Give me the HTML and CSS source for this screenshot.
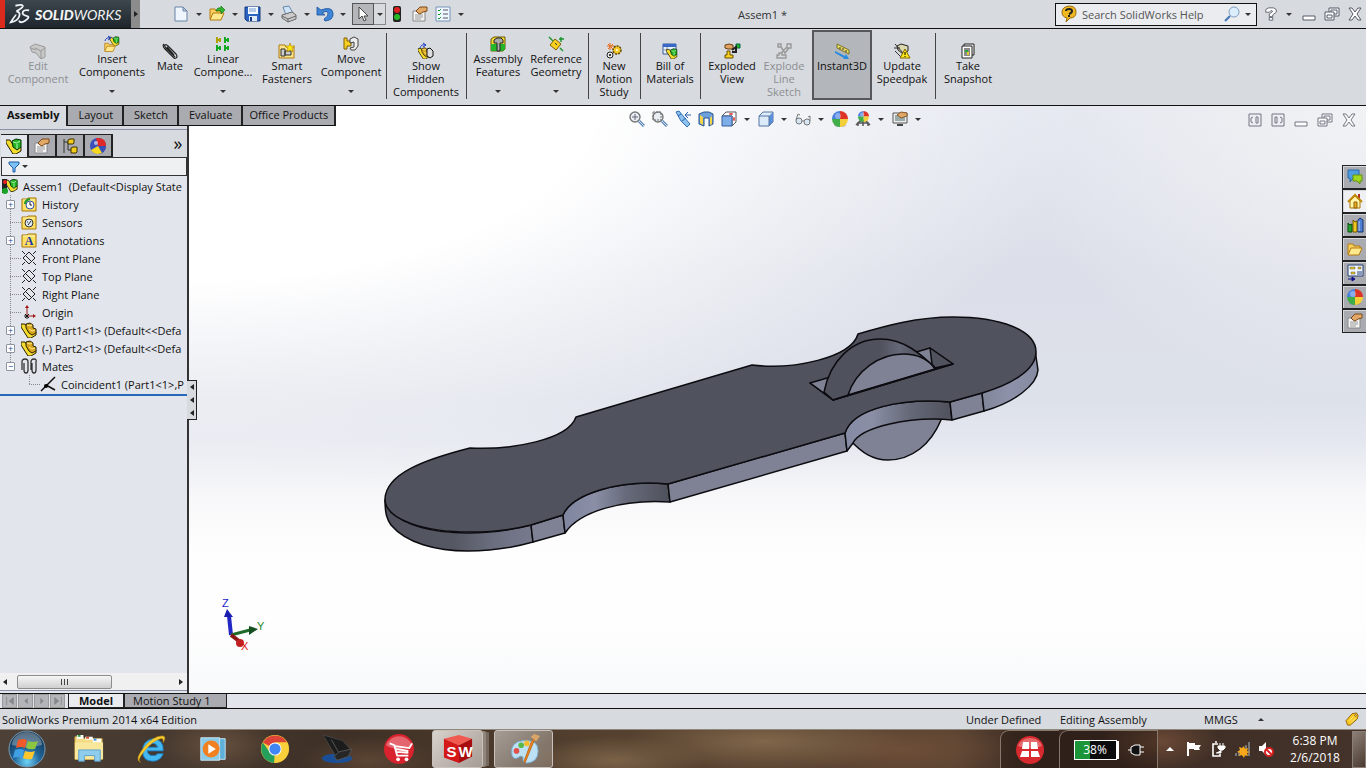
FILE: index.html
```
<!DOCTYPE html>
<html lang="en">
<head>
    <meta charset="utf-8">
    <title>SolidWorks - Assem1</title>
    <link rel="stylesheet" href="styles.css">
</head>
<body>
    <!-- Icon sprite -->
    <svg class="sprite" aria-hidden="true">
        <symbol id="part" viewBox="0 0 16 16">
            <path d="M0 2h4l6 9 5-1v3l-5 3h-3L0 5z" fill="#f4dc30" stroke="#2a2200"/>
            <path d="M5 2l4-1 3 2v3l3 1v4l-4 2-3-2-3-5z" fill="#d9a51c" stroke="#2a2200"/>
            <path d="M6 3l3 1 2-1M8 7l3 2 3-1" fill="none" stroke="#ffe98c"/>
        </symbol>
        <symbol id="asm" viewBox="0 0 16 16">
            <path d="M0 2h4l5 8 6-1v4l-5 3H7L0 5z" fill="#f4dc30" stroke="#222000"/>
            <path d="M6 3l4-2 5 1v7l-4 3-4-3z" fill="#24b524" stroke="#003000"/>
            <path d="M7 4l4 1 3-2M11 6v5" fill="none" stroke="#b4f4b4"/>
        </symbol>
        <symbol id="folder" viewBox="0 0 16 16">
            <path d="M1 13V3h5l1 2h6v3" fill="#f8d060" stroke="#b47a10"/>
            <path d="M1 14l3-7h11l-3 7z" fill="#ffe98c" stroke="#b47a10"/>
        </symbol>
        <symbol id="props" viewBox="0 0 16 16">
            <path d="M1 5h12v10H1z" fill="#f4f4f4" stroke="#888"/>
            <path d="M3 9h8M3 11h8M3 13h6" stroke="#999"/>
            <path d="M4 5l4-4h7v4l-4 1-3 2-2-1z" fill="#e2a868" stroke="#7a4818"/>
        </symbol>
        <symbol id="ball" viewBox="0 0 16 16">
            <ellipse cx="8" cy="14" rx="6" ry="2" fill="#777" opacity=".5"/>
            <path d="M8 8V0a8 8 0 0 0-8 8z" fill="#4a80e0"/>
            <path d="M8 8h8a8 8 0 0 0-8-8z" fill="#dd3428"/>
            <path d="M8 8v8a8 8 0 0 0 8-8z" fill="#f3cf3a"/>
            <path d="M8 8H0a8 8 0 0 0 8 8z" fill="#3fae49"/>
            <circle cx="6" cy="5" r="3" fill="#fff" opacity=".35"/>
        </symbol>
        <symbol id="plane" viewBox="0 0 16 16">
            <path d="M1 1l3 3M12 12l3 3M8 2l6 6-6 6-6-6zM15 1l-3 3M4 12l-3 3M5 6l5 5" fill="none" stroke="#222"/>
        </symbol>
        <symbol id="lens" viewBox="0 0 16 16">
            <circle cx="6" cy="6" r="5" fill="#e8eef4" stroke="#777" stroke-width="1.4"/>
            <path d="M10 10l5 5" stroke="#5a86b8" stroke-width="3"/>
            <path d="M10 10l5 5" stroke="#cfe2f4"/>
        </symbol>
        <symbol id="restore" viewBox="0 0 16 14">
            <path d="M5 1h10v8H5z" fill="#fff" stroke="#555a68"/>
            <path d="M7 3h6v4H7z" fill="none" stroke="#555a68"/>
            <path d="M1 5h9v8H1z" fill="#fff" stroke="#555a68"/>
            <path d="M3 8h5v3H3z" fill="none" stroke="#555a68"/>
        </symbol>
        <symbol id="cross" viewBox="0 0 14 14">
            <path d="M1 1h3l3 4 3-4h3L9 7l4 6h-3L7 9l-3 4H1l4-6z" fill="#fff" stroke="#555a68"/>
        </symbol>
        <symbol id="mini" viewBox="0 0 14 14">
            <path d="M1 9h12v4H1z" fill="#fff" stroke="#555a68"/>
        </symbol>
        <symbol id="tfolder" viewBox="0 0 16 16">
            <path d="M1 3h5l1-1h8v13H1z" fill="#ffe060" stroke="#a87508"/>
            <path d="M2 4h12" stroke="#fff4b0"/>
        </symbol>
        <symbol id="clip" viewBox="0 0 16 16">
            <path d="M13 14L4 5q-2-2-1-3t3 1l8 8q2 3 0 4t-3-1L3 6Q0 3 2 1M12 12L5 4" fill="none" stroke="#222" stroke-width="1.2"/>
        </symbol>
    </svg>

    <header class="titlebar">
        <div class="brand">
            <svg class="brand-mark" viewBox="0 0 24 22" aria-hidden="true">
                <path d="M7 2q7-2 8 0t-7 6M8 8q5 1 3 6t-9 6q5-8 6-8M22 7q-6-1-7 2t4 4-1 5-7 0" fill="none" stroke="#eef2f5" stroke-width="2"/>
            </svg>
            <span class="brand-name"><b>SOLID</b>WORKS</span>
        </div>
        <button class="brand-more" aria-label="Menu"><i class="right"></i></button>
        <nav class="quick">
            <button aria-label="New"><svg viewBox="0 0 16 16"><path d="M2 1h8l4 4v10H2z" fill="#eef5fd" stroke="#6b83a5"/><path d="M10 1v4h4z" fill="#b9cce4" stroke="#6b83a5"/></svg></button>
            <button class="drop" aria-label="New options"><i></i></button>
            <button aria-label="Open"><svg viewBox="0 0 16 16"><use href="#folder"/><path d="M7 5q1-4 5-3V0l4 4-4 4V5q-3-1-5 0z" fill="#2fb52f" stroke="#0a6a0a" stroke-width=".6"/></svg></button>
            <button class="drop" aria-label="Open options"><i></i></button>
            <button aria-label="Save"><svg viewBox="0 0 16 16"><path d="M0 1h15v14H2l-2-2z" fill="#2c62c0" stroke="#133a80"/><path d="M3 1h10v7H3z" fill="#f4f8ff"/><path d="M4 3h7M4 5h7" stroke="#7a9ad0"/><path d="M4 10h8v5H4z" fill="#dfe8f5"/><path d="M5 11h2v4H5z" fill="#133a80"/></svg></button>
            <button class="drop" aria-label="Save options"><i></i></button>
            <button aria-label="Print"><svg viewBox="0 0 16 16"><path d="M2 1l6-1 4 7-7 2z" fill="#cfe4f8" stroke="#6888a8"/><path d="M1 9l10-3 4 3v4l-8 3-6-4z" fill="#ccc" stroke="#666"/><path d="M1 10l6 3 8-3M7 13v3" fill="none" stroke="#666"/></svg></button>
            <button class="drop" aria-label="Print options"><i></i></button>
            <button aria-label="Undo"><svg viewBox="0 0 16 16"><path d="M0 1v8h8L5 7q5-3 6 0t-4 6l1 2q9-1 8-8T4 4z" fill="#3f86d8" stroke="#184f98" stroke-width=".8"/></svg></button>
            <button class="drop" aria-label="Undo options"><i></i></button>
            <button class="picked" aria-label="Select"><svg viewBox="0 0 16 16"><path d="M4 1v12l3-3 2 5 2-1-2-4h4z" fill="#fff" stroke="#444"/></svg></button>
            <button class="drop picked-drop" aria-label="Select options"><i></i></button>
            <button aria-label="Rebuild"><svg viewBox="0 0 16 16"><rect x="4" y="0" width="8" height="16" rx="2" fill="#222"/><circle cx="8" cy="4" r="3" fill="#e02020"/><circle cx="8" cy="11" r="3" fill="#28b828"/></svg></button>
            <button class="spaced" aria-label="File properties"><svg viewBox="0 0 16 16"><use href="#props"/></svg></button>
            <button class="spaced" aria-label="Options"><svg viewBox="0 0 16 16"><path d="M1 1h14v14H1z" fill="#eef6ff" stroke="#7694b8"/><path d="M3 4l1 1 2-2M3 8l1 1 2-2M3 12l1 1 2-2" fill="none" stroke="#18982a"/><path d="M8 4h5M8 8h5M8 12h5" stroke="#556"/></svg></button>
            <button class="drop" aria-label="More options"><i></i></button>
        </nav>
        <h1 class="doc-title">Assem1 *</h1>
        <form class="search">
            <svg viewBox="0 0 16 16"><path d="M8 0q7 0 7 6t-6 6l-4 4 1-4Q1 11 1 6t7-6z" fill="#f0b822" stroke="#9a6a08"/><path d="M5 5q0-2 3-2t3 2-3 3M8 9v2" fill="none" stroke="#222" stroke-width="2"/></svg>
            <input type="text" aria-label="Search" placeholder="Search SolidWorks Help">
            <button type="button" aria-label="Find"><svg viewBox="0 0 16 16"><circle cx="10" cy="6" r="5" fill="#dceefb" stroke="#7f9fc0"/><path d="M6 10l-5 5" stroke="#4474b4" stroke-width="2"/></svg></button>
            <button type="button" class="drop" aria-label="Search options"><i></i></button>
        </form>
        <div class="window-buttons">
            <button aria-label="Help"><svg viewBox="0 0 16 16"><path d="M2 6V3l3-2h6l3 2v3l-4 3v2H6V8l4-3-2-1-2 2zM6 12h4v3H6z" fill="#fff" stroke="#555a68"/></svg></button>
            <button class="drop" aria-label="Help options"><i></i></button>
            <button aria-label="Minimize"><svg viewBox="0 0 14 14"><use href="#mini"/></svg></button>
            <button aria-label="Restore"><svg class="wide" viewBox="0 0 16 14"><use href="#restore"/></svg></button>
            <button aria-label="Close"><svg viewBox="0 0 14 14"><use href="#cross"/></svg></button>
        </div>
    </header>

    <section class="ribbon">
        <button class="tool w-xl" disabled><svg viewBox="0 0 16 16"><path d="M0 4l5-3 10 3v10l-4 2-5-6-4-1z" fill="#c8c8c8" stroke="#999"/><path d="M5 5l6 3v7M11 8l4-3M1 5l5 2" fill="none" stroke="#999"/></svg><span>Edit<br>Component</span></button>
        <button class="tool has-menu w-xl"><svg viewBox="0 0 16 16"><use href="#asm" x="5" y="0" width="11" height="10"/><use href="#folder" x="0" y="5" width="12" height="12"/><path d="M1 5q1-4 5-3M4 0l3 2-3 2" fill="none" stroke="#1838c8"/></svg><span>Insert<br>Components</span><i></i></button>
        <button class="tool w-xs"><svg viewBox="0 0 16 16"><use href="#clip"/></svg><span>Mate</span></button>
        <button class="tool has-menu w-l"><svg viewBox="0 0 16 16"><path d="M2 1v6M2 4h4M5 2v4" stroke="#b0a000" stroke-width="2"/><path d="M10 1v6M10 4h4M13 2v4M2 9v6M2 12h4M5 10v4M10 9v6M10 12h4M13 10v4" stroke="#12a822" stroke-width="2"/></svg><span>Linear<br>Compone...</span><i></i></button>
        <button class="tool w-l"><svg viewBox="0 0 16 16"><path d="M0 2h6l1 2h8v11H0z" fill="#fbe48a" stroke="#b07a10"/><path d="M2 6h4v7H2zM6 8h6v4H6z" fill="#ccc" stroke="#333"/><path d="M11 0l1 3h4l-3 2 1 4-3-2-3 2 1-4-3-2h4z" fill="#ffe610" stroke="#a88000" stroke-width=".6"/></svg><span>Smart<br>Fasteners</span></button>
        <button class="tool has-menu w-l"><svg viewBox="0 0 16 16"><path d="M1 2h3v3h4v5H4v3H1z" fill="#f8d020" stroke="#806000"/><path d="M7 3l4-2 4 2v7l-3 4H8l-1-2 4-1V6L7 7z" fill="#eee" stroke="#444"/></svg><span>Move<br>Component</span><i></i></button>
        <span class="rule"></span>
        <button class="tool w-xl"><svg viewBox="0 0 16 16"><use href="#part" x="0" y="4" width="12" height="12"/><path d="M9 6l3-1 3 3v5l-3 2-3-2z" fill="#ddd" stroke="#111"/><path d="M2 5q1-4 5-3M5 0l3 2-3 2" fill="none" stroke="#1838c8"/></svg><span>Show<br>Hidden<br>Components</span></button>
        <span class="rule"></span>
        <button class="tool has-menu w-m"><svg viewBox="0 0 16 16"><path d="M1 3l3-2h11v12l-2 2H1z" fill="#f8dc30" stroke="#6a5600"/><path d="M1 8h14v5l-2 2H1z" fill="#25b52b"/><path d="M4 4l3-2h4l2 2v3h-3v8H7V7H4z" fill="#aaa" stroke="#222"/></svg><span>Assembly<br>Features</span><i></i></button>
        <button class="tool has-menu w-m"><svg viewBox="0 0 16 16"><path d="M1 1l4 4M12 12l3 3M11 3h5M13 1v5" stroke="#16942a" stroke-width="1.4"/><path d="M7 3l6 5-5 6-6-5z" fill="#f8d020" stroke="#806000"/><path d="M7 7l2 2" stroke="#333"/></svg><span>Reference<br>Geometry</span><i></i></button>
        <span class="rule"></span>
        <button class="tool w-s"><svg viewBox="0 0 16 16"><circle cx="11" cy="7" r="4" fill="#f6c828" stroke="#5c4400" stroke-width="1.5" stroke-dasharray="2 1"/><circle cx="11" cy="7" r="1" fill="#fff"/><circle cx="4" cy="12" r="3" fill="#eee" stroke="#222"/><circle cx="4" cy="12" r="1"/><path d="M4 0v7M1 3h7M2 1l5 5M7 1L2 6" stroke="#e86818"/></svg><span>New<br>Motion<br>Study</span></button>
        <span class="rule"></span>
        <button class="tool w-s2"><svg viewBox="0 0 16 16"><path d="M1 1h13v10H1z" fill="#e8f0fc" stroke="#3858a0"/><path d="M1 1h13v3H1z" fill="#3868c8"/><path d="M1 7h13M5 4v7" stroke="#89a"/><use href="#asm" x="4" y="5" width="12" height="11"/></svg><span>Bill of<br>Materials</span></button>
        <span class="rule"></span>
        <button class="tool w-m"><svg viewBox="0 0 16 16"><path d="M1 2l4-1 4 1v4H4L1 5z" fill="#dfa264" stroke="#6a4010"/><path d="M12 1h4v4h-4z" fill="#25b52b" stroke="#064"/><path d="M8 7l4-3v5H8" fill="none" stroke="#222" stroke-width="2"/><path d="M3 8h3v4h3v3H1v-3h2z" fill="#f8d020" stroke="#6a5000"/></svg><span>Exploded<br>View</span></button>
        <button class="tool w-s" disabled><svg viewBox="0 0 16 16"><path d="M2 1h3v3H2zM11 1h4v4h-4zM3 10h3v2h4v3H1v-3h2zM5 4l4 6 4-5M5 10l6-6" fill="none" stroke="#999" stroke-width="1.4"/></svg><span>Explode<br>Line<br>Sketch</span></button>
        <button class="tool w-m2 pressed"><svg viewBox="0 0 16 16"><path d="M3 1l12 6v4L3 5z" fill="#efdf60" stroke="#77702a"/><path d="M6 4v2M9 5v2M12 7v2" stroke="#333"/><path d="M1 8l10 5 1-2 3 5-6 0 1-1-9-5z" fill="#2a8ce0"/></svg><span>Instant3D</span></button>
        <button class="tool w-m2"><svg viewBox="0 0 16 16"><path d="M3 3l4-2 7 2v5l-5 3-5-4z" fill="#dcd8b0" stroke="#222"/><path d="M1 1l8 9M1 8l7 7M0 5h6" stroke="#333"/><path d="M11 6l5 9H6z" fill="#ffe818" stroke="#806a00"/><path d="M11 9v3M11 13v1" stroke="#000"/></svg><span>Update<br>Speedpak</span></button>
        <span class="rule"></span>
        <button class="tool w-m2"><svg viewBox="0 0 16 16"><path d="M4 1h10v11H4z" fill="#eee" stroke="#222"/><path d="M2 3h10v12H2z" fill="#fff" stroke="#222"/><path d="M4 5h6v8H4z" fill="#8a8a8a"/><path d="M5 7h3v2H5z" fill="#28a838"/><path d="M7 9h2v3H7z" fill="#eacb2a"/></svg><span>Take<br>Snapshot</span></button>
    </section>

    <main class="workspace">
        <aside class="side">
            <nav class="command-tabs">
                <button class="active">Assembly</button>
                <button>Layout</button>
                <button>Sketch</button>
                <button>Evaluate</button>
                <button>Office Products</button>
            </nav>
            <div class="panel">
                <nav class="panel-tabs">
                    <button class="active" aria-label="FeatureManager"><svg viewBox="0 0 16 16"><use href="#asm"/></svg></button>
                    <button aria-label="PropertyManager"><svg viewBox="0 0 16 16"><use href="#props"/></svg></button>
                    <button aria-label="ConfigurationManager"><svg viewBox="0 0 16 16"><path d="M2 1v14M2 4h4M6 4v8h4" fill="none" stroke="#333"/><path d="M6 2l2-1h4v4l-1 1H6zM9 10l2-1h4v5l-1 1H9z" fill="#f4cd1c" stroke="#3c3000"/></svg></button>
                    <button aria-label="DisplayManager"><svg viewBox="0 0 16 16"><circle cx="8" cy="8" r="8" fill="#3a50b8"/><path d="M8 8L6 0q10-1 10 8z" fill="#e02828"/><path d="M8 8l8 1q-2 8-9 7z" fill="#3a50b8"/><path d="M8 8l-7 4q4 6 11 3z" fill="#f6d820"/><circle cx="6" cy="5" r="2" fill="#fff" opacity=".6"/></svg></button>
                    <button class="more" aria-label="Expand">»</button>
                </nav>
                <div class="filter">
                    <svg viewBox="0 0 12 12"><path d="M1 1h10v2L7 7v4H5V7L1 3z" fill="#7cc0f4" stroke="#1a5aa8"/></svg>
                    <i></i>
                    <input type="text" aria-label="Filter tree">
                </div>
                <div class="tree">
                    <div class="row root"><svg viewBox="0 0 16 16"><use href="#asm" x="3" y="0" width="13" height="14"/><path d="M0 1h5v14H0z" fill="#222"/><circle cx="3" cy="4" r="2" fill="#e22"/><circle cx="3" cy="13" r="3" fill="#18a428"/></svg>Assem1&nbsp; (Default&lt;Display State</div>
                    <ul>
                        <li><div class="row"><button class="toggle" aria-label="Expand">+</button><svg viewBox="0 0 16 16"><use href="#tfolder"/><circle cx="9" cy="9" r="4" fill="#fff" stroke="#2c50a8"/><path d="M9 6v3h2" fill="none" stroke="#222"/><path d="M4 8q0-4 5-5" fill="none" stroke="#1a9c2a" stroke-width="2"/></svg>History</div></li>
                        <li><div class="row"><span class="stub"></span><svg viewBox="0 0 16 16"><use href="#tfolder"/><circle cx="8" cy="9" r="4" fill="#dde8f4" stroke="#333"/><path d="M7 11l3-4M6 8h1" stroke="#222"/></svg>Sensors</div></li>
                        <li><div class="row"><button class="toggle" aria-label="Expand">+</button><svg viewBox="0 0 16 16"><use href="#tfolder"/><text x="8" y="13" class="glyph-a">A</text></svg>Annotations</div></li>
                        <li><div class="row"><span class="stub"></span><svg viewBox="0 0 16 16"><use href="#plane"/></svg>Front Plane</div></li>
                        <li><div class="row"><span class="stub"></span><svg viewBox="0 0 16 16"><use href="#plane"/></svg>Top Plane</div></li>
                        <li><div class="row"><span class="stub"></span><svg viewBox="0 0 16 16"><use href="#plane"/></svg>Right Plane</div></li>
                        <li><div class="row"><span class="stub"></span><svg viewBox="0 0 16 16"><path d="M6 12V2M6 12h7" stroke="#a01818"/><path d="M4 4l2-3 2 3zM12 10l3 2-3 2z" fill="#a01818"/><path d="M4 10l4 4M8 10l-4 4M3 12h3M6 12v3" stroke="#111"/></svg>Origin</div></li>
                        <li><div class="row"><button class="toggle" aria-label="Expand">+</button><svg viewBox="0 0 16 16"><use href="#part"/></svg>(f) Part1&lt;1&gt; (Default&lt;&lt;Defa</div></li>
                        <li><div class="row"><button class="toggle" aria-label="Expand">+</button><svg viewBox="0 0 16 16"><use href="#part"/></svg>(-) Part2&lt;1&gt; (Default&lt;&lt;Defa</div></li>
                        <li>
                            <div class="row"><button class="toggle" aria-label="Collapse">−</button><svg viewBox="0 0 16 16"><path d="M1 12V4q0-3 3-3t3 3v8q0 3-2 3t-2-3V5M10 12V4q0-3 3-3t2 3v8q0 3-2 3t-2-3V5" fill="none" stroke="#333" stroke-width="1.3"/></svg>Mates</div>
                            <ul>
                                <li><div class="row"><span class="stub"></span><svg viewBox="0 0 16 16"><path d="M15 1L1 15M6 9l9 5" stroke="#111" stroke-width="1.5"/><circle cx="6" cy="10" r="2"/></svg>Coincident1 (Part1&lt;1&gt;,P</div></li>
                            </ul>
                        </li>
                    </ul>
                </div>
                <div class="hscroll">
                    <button aria-label="Scroll left"><i class="left"></i></button>
                    <span class="thumb"></span>
                    <button class="end" aria-label="Scroll right"><i class="right"></i></button>
                </div>
            </div>
            <div class="splitter"><i class="left"></i><i class="left"></i><i class="left"></i></div>
        </aside>

        <section class="viewport">
            <!-- Model -->
            <svg class="model" viewBox="189 106 1177 587" preserveAspectRatio="xMidYMid slice" role="img" aria-label="Assembly model">
                <defs>
                    <linearGradient id="endL" gradientUnits="userSpaceOnUse" x1="388" y1="0" x2="532" y2="0"><stop offset="0" stop-color="#50525d"/><stop offset=".45" stop-color="#555762"/><stop offset=".75" stop-color="#6c6f80"/><stop offset="1" stop-color="#777a8d"/></linearGradient>
                    <linearGradient id="notchL" gradientUnits="userSpaceOnUse" x1="563" y1="0" x2="668" y2="0"><stop offset="0" stop-color="#8085a0"/><stop offset=".3" stop-color="#8a8fa6"/><stop offset=".6" stop-color="#676a7a"/><stop offset="1" stop-color="#4f515c"/></linearGradient>
                    <linearGradient id="notchR" gradientUnits="userSpaceOnUse" x1="846" y1="0" x2="951" y2="0"><stop offset="0" stop-color="#858ba3"/><stop offset=".25" stop-color="#8a8fa6"/><stop offset=".6" stop-color="#666978"/><stop offset="1" stop-color="#4f515c"/></linearGradient>
                    <linearGradient id="endR" gradientUnits="userSpaceOnUse" x1="982" y1="0" x2="1038" y2="0"><stop offset="0" stop-color="#82869a"/><stop offset=".5" stop-color="#8d92aa"/><stop offset="1" stop-color="#858aa0"/></linearGradient>
                    <linearGradient id="rim" gradientUnits="userSpaceOnUse" x1="824" y1="0" x2="935" y2="0"><stop offset="0" stop-color="#4f515c"/><stop offset=".5" stop-color="#4f515c"/><stop offset=".68" stop-color="#656877"/><stop offset=".85" stop-color="#50525d"/><stop offset="1" stop-color="#50525d"/></linearGradient>
                </defs>
                <g stroke="#0c0c10" stroke-width="1.5" stroke-linejoin="round" stroke-linecap="round">
                    <path d="M850 440C862 453 873 460 888 460C912 460 931 444 941 420L941 408L862 425z" fill="#7f8294"/>
                    <path d="M385 500C385 514 387 519 391 525C406 543 436 551 468 551C492 551 512 548 533 542L531 525C475 540 395 535 385 500z" fill="url(#endL)"/>
                    <path d="M531 525L563 515L565 533L533 542z" fill="#7f8294"/>
                    <path d="M563 515C572 494 620 479 668 484L670 502C623 499 580 511 565 533z" fill="url(#notchL)"/>
                    <path d="M668 484L845 433L847 451L670 502z" fill="#7f8294"/>
                    <path d="M845 433C853 408 902 398 950 402L952 420C910 416 861 427 853 443L847 451z" fill="url(#notchR)"/>
                    <path d="M950 402L982 393L984 411L952 420z" fill="#7f8294"/>
                    <path d="M982 393C1015 381 1035 367 1035 350L1038 370C1037 385 1015 402 984 411z" fill="url(#endR)"/>
                    <path d="M470 448C512 450 568 440 576 417L752 365C793 370 851 358 858 334C885 326 917 317 953 317C1000 317 1036 330 1036 352C1036 371 1009 385 982 393L950 402C902 398 853 408 845 433L668 484C620 479 572 494 563 515L531 525C511 530 491 532 470 532C425 532 385 520 385 499C386 474 423 460 470 448z" fill="#50525d"/>
                    <path d="M810 383L930 348L953 364L833 400z" fill="#7f8294"/>
                    <path d="M930 348L932 364L935 368L953 364z" fill="#50525d"/>
                    <path d="M824 392C830 361 852 339 880 339C904 339 921 354 935 368L833 400z" fill="url(#rim)"/>
                    <path d="M848 395C856 370 880 354 903 354C918 354 929 360 935 369z" fill="#7f8294"/>
                    <path d="M810 383L833 400L953 364" fill="none"/>
                </g>
                <!-- Triad -->
                <path d="M231 635L229 616" stroke="#2226c4" stroke-width="4"/>
                <path d="M224 617l3-8 6 8z" fill="#1a1eb0"/>
                <path d="M231 635l19-5" stroke="#1f6a28" stroke-width="3"/>
                <path d="M249 626l9 3-9 6z" fill="#145020"/>
                <path d="M231 635l8 6" stroke="#8c1515" stroke-width="4"/>
                <circle cx="240" cy="643" r="4" fill="#c02020"/>
                <text class="axis z" x="222" y="607">Z</text>
                <text class="axis y" x="257" y="630">Y</text>
                <text class="axis x" x="241" y="650">X</text>
            </svg>
            <div class="view-tools">
                <button aria-label="Zoom to fit"><svg viewBox="0 0 16 16"><use href="#lens"/><path d="M3 6h6M6 3v6" stroke="#667"/></svg></button>
                <button aria-label="Zoom to area"><svg viewBox="0 0 16 16"><use href="#lens"/><path d="M1 1h8v8H1z" fill="none" stroke="#777" stroke-dasharray="2 1"/></svg></button>
                <button aria-label="Previous view"><svg viewBox="0 0 16 16"><path d="M1 1l3-1 5 6 6 7-3 3-6-6z" fill="#8ec2ee" stroke="#3470b0"/><path d="M3 5l3-2M7 10l4-3M16 4h-5M13 1l-3 3 3 3" fill="none" stroke="#2860b0"/></svg></button>
                <button aria-label="Section view"><svg viewBox="0 0 16 16"><path d="M1 3l5-2h5l4 2v10l-4 2V7H6v8l-5-2z" fill="#6d9fda" stroke="#2b5590"/><path d="M2 4l3 2v8l-3-2zM12 7l2-2v8l-2 1z" fill="#f5d548"/></svg></button>
                <button aria-label="View orientation"><svg viewBox="0 0 16 16"><path d="M5 1h10v10l-4 4V5H1z" fill="#fff" stroke="#555"/><path d="M1 5h10v10H1z" fill="#7eaee8" stroke="#355f9c"/><path d="M8 3h4M10 2v2M13 6v4M12 8h2" stroke="#d22"/></svg></button>
                <button class="drop" aria-label="Orientation options"><i></i></button>
                <button aria-label="Display style"><svg viewBox="0 0 16 16"><path d="M1 5l4-4h10v10l-4 4H1z" fill="#dcebfa" stroke="#5574a0"/><path d="M11 5l4-4v10l-4 4z" fill="#5d8ed8"/><path d="M1 5h10v10" fill="none" stroke="#5574a0"/></svg></button>
                <button class="drop" aria-label="Style options"><i></i></button>
                <button aria-label="Hide/show items"><svg viewBox="0 0 16 16"><circle cx="4" cy="10" r="3" fill="#d6e6f4" stroke="#777"/><circle cx="12" cy="11" r="3" fill="#d6e6f4" stroke="#777"/><path d="M7 10h2M1 9l2-6 2 1M15 10V5l-2 1" fill="none" stroke="#777"/></svg></button>
                <button class="drop" aria-label="Visibility options"><i></i></button>
                <button aria-label="Edit appearance"><svg viewBox="0 0 16 16"><use href="#ball"/></svg></button>
                <button aria-label="Apply scene"><svg viewBox="0 0 16 16"><path d="M1 14l4-4h6l4 4M3 15v-3M8 10v5M13 15v-3M2 12h12" fill="none" stroke="#555" stroke-width="1.5"/><use href="#ball" x="3" y="0" width="11" height="11"/></svg></button>
                <button class="drop" aria-label="Scene options"><i></i></button>
                <button aria-label="View settings"><svg viewBox="0 0 16 16"><path d="M1 2h14v10H1z" fill="#eee" stroke="#555"/><path d="M3 4h10v6H3z" fill="#9aa"/><path d="M5 14h6" stroke="#444" stroke-width="2"/><path d="M5 4l4-3 6 1v3l-6 2z" fill="#e0a868" stroke="#8a5a28"/></svg></button>
                <button class="drop" aria-label="Settings options"><i></i></button>
            </div>
            <div class="doc-buttons">
                <button aria-label="Collapse left"><svg viewBox="0 0 14 14"><path d="M1 1h12v12H1zM8 4h2v6H8zM5 4L3 5v4l2 1" fill="none" stroke="#555a68"/></svg></button>
                <button aria-label="Collapse right"><svg viewBox="0 0 14 14"><path d="M1 1h12v12H1zM4 4h2v6H4zM9 4l2 1v4l-2 1" fill="none" stroke="#555a68"/></svg></button>
                <button aria-label="Minimize document"><svg viewBox="0 0 14 14"><use href="#mini"/></svg></button>
                <button aria-label="Restore document"><svg class="wide" viewBox="0 0 16 14"><use href="#restore"/></svg></button>
                <button aria-label="Close document"><svg viewBox="0 0 14 14"><use href="#cross"/></svg></button>
            </div>
            <nav class="task-pane">
                <button aria-label="Forum"><svg viewBox="0 0 16 16"><path d="M1 1h11v8H6l-3 4V9H1z" fill="#4d9de0" stroke="#2a6aa8"/><path d="M6 6h9v6h-2v3l-3-3H6z" fill="#a0d820" stroke="#609010"/></svg></button>
                <button class="active" aria-label="Resources"><svg viewBox="0 0 16 16"><path d="M11 1h2v5h-2z" fill="#b83028"/><path d="M3 8l5-5 5 5v7H3z" fill="#fff4a8" stroke="#a87408"/><path d="M1 9l7-7 7 7" fill="none" stroke="#c08808" stroke-width="2"/><path d="M7 9h3v6H7z" fill="#e8a820" stroke="#906008"/></svg></button>
                <button aria-label="Design library"><svg viewBox="0 0 16 16"><path d="M1 9V6l2 2 2-1v8H1z" fill="#1fa82c" stroke="#064a0c"/><path d="M6 6V3l2 2 2-1v11H6z" fill="#f0c820" stroke="#705600"/><path d="M11 3l2-2 3 2v12h-5z" fill="#4f7fd4" stroke="#17326c"/><path d="M12 4v10" stroke="#bcd4fa"/></svg></button>
                <button aria-label="File explorer"><svg viewBox="0 0 16 16"><use href="#folder"/></svg></button>
                <button aria-label="View palette"><svg viewBox="0 0 16 16"><path d="M1 0h15v11H1z" fill="#f4f8ff" stroke="#223c70"/><path d="M3 2h5v2H3zM4 7h4v2H4zM11 2h3v2h-3z" fill="#e8c818" stroke="#555" stroke-width=".5"/><path d="M10 7h5M10 9h5" stroke="#223c70"/><path d="M1 14h5M5 12l3 2-3 2z" fill="#10108c" stroke="#10108c"/></svg></button>
                <button aria-label="Appearances"><svg viewBox="0 0 16 16"><use href="#ball"/></svg></button>
                <button aria-label="Custom properties"><svg viewBox="0 0 16 16"><use href="#props"/></svg></button>
            </nav>
        </section>
    </main>

    <nav class="sheet-tabs">
        <button class="step" disabled aria-label="First"><svg viewBox="0 0 12 12"><path d="M2 1v10M10 2L5 6l5 4z" fill="#888" stroke="#888"/></svg></button>
        <button class="step" disabled aria-label="Previous"><svg viewBox="0 0 12 12"><path d="M8 2L4 6l4 4z" fill="#888"/></svg></button>
        <button class="step" disabled aria-label="Next"><svg viewBox="0 0 12 12"><path d="M4 2l4 4-4 4z" fill="#888"/></svg></button>
        <button class="step" disabled aria-label="Last"><svg viewBox="0 0 12 12"><path d="M10 1v10M2 2l5 4-5 4z" fill="#888" stroke="#888"/></svg></button>
        <button class="sheet active">Model</button>
        <button class="sheet">Motion Study 1</button>
    </nav>

    <footer class="status">
        <span class="edition">SolidWorks Premium 2014 x64 Edition</span>
        <span class="state">Under Defined</span>
        <span class="mode">Editing Assembly</span>
        <button class="units">MMGS <i class="up"></i></button>
        <svg class="tag" viewBox="0 0 16 16"><path d="M1 10l7-8 5-1 2 3-1 4-8 7H3z" fill="#f8c820" stroke="#8a5a08"/><path d="M5 10l5-5M7 12l5-5" stroke="#fff0a0"/><circle cx="12" cy="4" r="1" fill="#fff" stroke="#8a5a08"/></svg>
    </footer>

    <footer class="taskbar">
        <button class="start" aria-label="Start">
            <svg viewBox="0 0 38 38">
                <defs><radialGradient id="orb" cx=".5" cy=".85" r=".8"><stop offset="0" stop-color="#6fd4f8"/><stop offset=".45" stop-color="#21679c"/><stop offset="1" stop-color="#12304c"/></radialGradient></defs>
                <circle cx="19" cy="19" r="18" fill="url(#orb)" stroke="#7a9cb4"/>
                <path d="M4 15a15 13 0 0 1 30 0q-15 4-30 0z" fill="#fff" opacity=".3"/>
                <path d="M10 10q5-2 9 0l-2 8q-4-2-9 0z" fill="#ef5a28"/>
                <path d="M20 11q5 2 10 0l-3 8q-5 1-9-1z" fill="#8cc63f"/>
                <path d="M7 20q5-2 9 0l-2 8q-4-2-9 0z" fill="#3fa0e4"/>
                <path d="M17 21q5 2 10 0l-3 8q-5 1-9-1z" fill="#fcc72c"/>
            </svg>
        </button>
        <button class="app" aria-label="Explorer"><svg viewBox="0 0 32 32"><path d="M1 3h8l2 2h19v22H1z" fill="#f5dc84" stroke="#c8a040"/><path d="M3 1h7v4H3zM12 3h8v3h-8zM20 5h9v4h-9z" fill="#fff"/><path d="M4 1h3v2H4z" fill="#2a9c38"/><path d="M13 3h3v2h-3z" fill="#d84828"/><path d="M21 5h3v2h-3z" fill="#2f90d8"/><path d="M1 9h30v18H1z" fill="#f9e79c"/><path d="M5 29V17h23v12h-6v-6H11v6z" fill="#8fcdec" stroke="#5aa0cc"/></svg></button>
        <button class="app" aria-label="Internet Explorer"><svg viewBox="0 0 32 32"><path d="M29 18H12q1 5 6 5 4 0 5-2h6q-3 8-11 8-11 0-11-11T18 5q12 1 11 13zM12 14h11q-1-4-5-4t-6 4z" fill="#45b8f0" stroke="#1a7cc0"/><path d="M5 30Q-2 28 8 15T28 2q5 0 1 7 1-5-3-4Q18 7 9 18T5 30z" fill="#f8cc30" stroke="#c89410" stroke-width=".6"/></svg></button>
        <button class="app" aria-label="Media Player"><svg viewBox="0 0 32 32"><path d="M8 5h21v22H8z" fill="#5fb0d8" stroke="#c4e4f4"/><path d="M3 4h20v24H3z" fill="#8ccbe8" stroke="#c4e4f4"/><circle cx="14" cy="16" r="9" fill="#f08020"/><path d="M11 11l8 5-8 5z" fill="#fff"/></svg></button>
        <button class="app" aria-label="Chrome"><svg viewBox="0 0 32 32"><circle cx="16" cy="16" r="15" fill="#f9cf3c"/><path d="M16 16L3 9A15 15 0 0 1 29 9H16z" fill="#db4437"/><path d="M16 16l-1 15A15 15 0 0 1 3 9l7 10z" fill="#25a05c"/><path d="M16 9h13q4 11-4 18l-9 4 7-12z" fill="#f9cf3c"/><circle cx="16" cy="16" r="7" fill="#fff"/><circle cx="16" cy="16" r="6" fill="#4285f4"/></svg></button>
        <button class="app" aria-label="Device"><svg viewBox="0 0 32 32"><ellipse cx="16" cy="26" rx="16" ry="5" fill="#1a4f98"/><path d="M1 1l21 6 8 9-15 8z" fill="#1c1c1c" stroke="#444"/><path d="M10 6l9 16" stroke="#5a5a5a"/><path d="M13 24l5-5 14-3-4 8-12 4z" fill="#262626" stroke="#555"/></svg></button>
        <button class="app" aria-label="Store"><svg viewBox="0 0 32 32"><circle cx="16" cy="16" r="16" fill="#d8232e"/><path d="M2 12a15 15 0 0 1 28 0q-14 8-28 0z" fill="#fff" opacity=".3"/><path d="M6 10l5 2 3 11h12M12 13l15 2 3-5M12 16l14 2M13 19l13 1" fill="none" stroke="#fff" stroke-width="2"/><circle cx="15" cy="27" r="2" fill="#fff"/><circle cx="24" cy="27" r="2" fill="#fff"/></svg></button>
        <button class="app open stacked" aria-label="SolidWorks"><svg viewBox="0 0 32 32"><path d="M1 5L17 1l14 4-14 7z" fill="#f05a50"/><path d="M1 5l16 7v19L1 25z" fill="#d41818"/><path d="M17 12l14-7v19l-14 7z" fill="#a80c0c"/><text x="9" y="24" class="cube">S</text><text x="24" y="24" class="cube">W</text></svg></button>
        <button class="app open" aria-label="Paint"><svg viewBox="0 0 32 32"><path d="M3 22Q1 8 16 7t15 11-12 13q-5 0-4-6-2-3-5 0-5 3-7-3z" fill="#bce0f4" stroke="#78aed0"/><circle cx="8" cy="18" r="3" fill="#e05048"/><circle cx="13" cy="12" r="3" fill="#58b848"/><circle cx="19" cy="10" r="3" fill="#f4bc30"/><path d="M28 4L17 31l-1-2L24 8z" fill="#f08828" stroke="#c06818"/><path d="M23 3l4-3 6 2-4 6z" fill="#d8a468"/></svg></button>
        <div class="tray">
            <button class="deskband" aria-label="Windows"><svg viewBox="0 0 28 28"><circle cx="14" cy="14" r="14" fill="#d82a2e"/><path d="M2 10a13 13 0 0 1 24 0q-12 5-24 0z" fill="#fff" opacity=".3"/><path d="M7 6h6v7H6zM15 6h6l1 7h-7zM6 15h7v6H4zM15 15h7l2 6h-9z" fill="#fff"/></svg></button>
            <div class="deskband power">
                <span class="battery">38%</span>
                <svg viewBox="0 0 16 12"><path d="M0 6h3M3 3l4-2h5v10H7L3 9zM12 3h4M12 8h4" fill="#111" stroke="#fff"/></svg>
            </div>
            <button class="notify" aria-label="Hidden icons"><i class="up"></i></button>
            <button class="notify" aria-label="Action center"><svg viewBox="0 0 16 16"><path d="M2 1v14" stroke="#fff" stroke-width="2"/><path d="M3 2h6v2h6l-2 3 1 2H8V8H3z" fill="#fff"/></svg></button>
            <button class="notify" aria-label="Power"><svg viewBox="0 0 16 16"><path d="M8 3H3v12h7v-2M5 1h2" fill="none" stroke="#fff" stroke-width="1.6"/><path d="M8 5h7v2l-2 2h-3L8 7zM10 2v3M13 2v3M11 9v3H6" fill="#fff" stroke="#fff"/></svg></button>
            <button class="notify" aria-label="Network"><svg viewBox="0 0 16 16"><path d="M1 12h2v3H1zM4 10h2v5H4zM8 7h2v8H8zM11 4h2v11h-2zM14 1h2v14h-2z" fill="#777"/><path d="M10 5l1 3 3-1-1 3 3 1-3 1 1 3-3-1-1 3-2-3-3 1 1-3-3-1 3-2-1-3 3 1z" fill="#f8a818"/></svg></button>
            <button class="notify" aria-label="Volume"><svg viewBox="0 0 16 16"><path d="M1 5h3l4-4v13l-4-4H1z" fill="#fff"/><circle cx="11" cy="11" r="4" fill="#fff" stroke="#d82020" stroke-width="2"/><path d="M8 8l6 6" stroke="#d82020" stroke-width="2"/></svg></button>
            <div class="clock"><time>6:38 PM</time><time>2/6/2018</time></div>
            <button class="show-desktop" aria-label="Show desktop"></button>
        </div>
    </footer>
</body>
</html>
```
FILE: styles.css
```
:root {
    --bar: #d7dadf;
    --line: #111;
    --tab: #a9abb0;
    --ink: #111;
}

* { box-sizing: border-box; }

body {
    margin: 0;
    height: 100vh;
    display: flex;
    flex-direction: column;
    overflow: hidden;
    font-family: "Open Sans", "Noto Sans", sans-serif;
    font-size: 11px;
    line-height: 13px;
    color: var(--ink);
    background: var(--bar);
}

button, input { font: inherit; color: inherit; }
button { padding: 0; border: 0; background: none; }
svg { width: 16px; height: 16px; flex: none; overflow: visible; }
.sprite { position: absolute; width: 0; height: 0; }

/* small arrows */
i {
    display: block;
    flex: none;
    width: 0;
    height: 0;
    border: 3px solid transparent;
    border-top-color: #333;
    border-bottom: 0;
}
i.up { border-top: 0; border-bottom: 3px solid #333; }
i.left { border: 3px solid transparent; border-left: 0; border-right: 4px solid #222; }
i.right { border: 3px solid transparent; border-right: 0; border-left: 4px solid #222; }

/* title bar */
.titlebar {
    display: flex;
    align-items: center;
    height: 29px;
    flex: none;
    border-bottom: 1px solid var(--line);
}
.brand {
    display: flex;
    align-items: center;
    gap: 4px;
    width: 131px;
    height: 28px;
    padding-left: 4px;
    border-left: 5px solid #dc2a1c;
    background: linear-gradient(#3d474e, #1e262c);
    color: #f2f4f5;
}
.brand-mark { width: 22px; height: 22px; }
.brand-name { font: italic 14px "Lato", sans-serif; }
.brand-name b { font-weight: 900; }
.brand-more {
    display: flex;
    align-items: center;
    justify-content: center;
    width: 9px;
    height: 28px;
    background: #8c8c8c;
}
.quick { display: flex; align-items: center; margin-left: 32px; }
.quick button { display: flex; align-items: center; justify-content: center; width: 18px; height: 22px; }
.quick .picked { width: 22px; border: 1px solid #555; background: #b4b6ba; }
.quick .picked-drop { width: 12px; border: 1px solid #888; border-left: 0; margin-right: 2px; }
.quick .spaced { margin-left: 5px; }
.doc-title { flex: 1; margin: 0; padding-left: 268px; font-size: 11px; font-weight: 400; color: #333; }
.search {
    display: flex;
    align-items: center;
    width: 202px;
    height: 23px;
    padding: 0 5px;
    gap: 5px;
    border: 1px solid var(--line);
    background: #eaecef;
}
.search input { flex: 1; min-width: 0; padding: 0; border: 0; background: none; outline: 0; }
.search input::placeholder { color: #555; opacity: 1; }
.search button { display: flex; }
.window-buttons { display: flex; align-items: center; margin: 0 4px 0 7px; gap: 8px; }
.window-buttons button { display: flex; }
.window-buttons svg, .doc-buttons svg { width: 14px; height: 14px; }
.window-buttons .wide, .doc-buttons .wide { width: 16px; }
.window-buttons .drop { margin-right: 2px; }

/* ribbon */
.ribbon {
    display: flex;
    flex: none;
    height: 77px;
    padding: 1px 0 0 1px;
    border-bottom: 1px solid var(--line);
}
.tool {
    flex: none;
    display: flex;
    flex-direction: column;
    align-items: center;
    justify-content: flex-start;
    height: 70px;
    padding-top: 13px;
    line-height: 13px;
    text-align: center;
    white-space: nowrap;
}
.tool.has-menu { padding-top: 6px; }
.tool i { margin-top: 12px; }
.tool:disabled { color: #8d8f93; }
.w-xl { width: 74px; }
.w-l { width: 64px; }
.w-m2 { width: 60px; }
.w-m { width: 58px; }
.w-s2 { width: 54px; }
.w-s { width: 46px; }
.w-xs { width: 42px; }
.rule { flex: none; width: 1px; height: 66px; margin: 3px 2px 0 3px; background: #444; }
.pressed { margin-left: 5px; padding-top: 11px; border: 2px solid #55575b; background: #b3b6ba; }

/* workspace */
.workspace { display: flex; flex: 1; min-height: 0; }
.side {
    position: relative;
    display: flex;
    flex-direction: column;
    width: 189px;
    flex: none;
    z-index: 1;
    border-right: 2px solid #333;
}
.command-tabs { display: flex; width: max-content; height: 20px; flex: none; border-bottom: 1px solid var(--line); }
.command-tabs button {
    height: 19px;
    padding: 0 9px 3px 10px;
    border-right: 2px solid #222;
    background: var(--tab);
    white-space: nowrap;
}
.command-tabs button:last-child { padding: 0 6px 3px; }
.command-tabs .active { height: 20px; padding: 0 7px 4px; background: var(--bar); font-weight: 700; }
.panel {
    display: flex;
    flex-direction: column;
    flex: 1;
    min-height: 0;
    margin-top: 3px;
    border-top: 1px solid #8c8fa8;
    background: #e2e5eb;
    overflow: hidden;
}
.panel-tabs { display: flex; height: 27px; padding: 4px 0 0 1px; background: var(--bar); flex: none; }
.panel-tabs button {
    display: flex;
    align-items: center;
    justify-content: center;
    width: 28px;
    border: 1px solid #222;
    border-left-width: 0;
    border-right-width: 2px;
    background: var(--tab);
}
.panel-tabs .active { border-bottom: 0; background: #e2e5eb; }
.panel-tabs .more { margin-left: auto; padding-bottom: 5px; width: 18px; border: 0; background: none; font-size: 18px; }
.filter {
    display: flex;
    align-items: center;
    gap: 2px;
    height: 19px;
    flex: none;
    margin: 0 0 1px 1px;
    padding-left: 6px;
    border: 1px solid #333;
    background: #eff0f2;
}
.filter svg { width: 12px; height: 12px; }
.filter input { flex: 1; min-width: 0; height: 15px; border: 0; background: none; }

/* feature tree */
.tree { padding-bottom: 1px; border-bottom: 2px solid #2868b8; white-space: nowrap; flex: none; }
.tree ul { margin: 0; padding: 0 0 0 10px; list-style: none; }
.tree li { background: repeating-linear-gradient(#888 0 1px, transparent 1px 2px) 0 0 / 1px 100% no-repeat; }
.tree li:last-child { background-size: 1px 9px; }
.tree li ul { padding-left: 19px; }
.row { display: flex; align-items: center; height: 18px; }
.row svg { margin-right: 5px; }
.root { padding-left: 2px; }
.stub { flex: none; width: 11px; height: 1px; background: repeating-linear-gradient(90deg, #888 0 1px, transparent 1px 2px); }
.toggle {
    flex: none;
    width: 9px;
    height: 9px;
    margin: 0 6px 0 -4px;
    border: 1px solid #8e95a0;
    border-radius: 1px;
    background: #fff;
    color: #224a9c;
    font-size: 9px;
    line-height: 7px;
}
.glyph-a { font: 700 12px "Liberation Serif", serif; fill: #1838a8; text-anchor: middle; }

.hscroll {
    display: flex;
    align-items: center;
    height: 17px;
    margin: auto 0 3px;
    padding: 0 3px;
    background: #f0f0f0;
    box-shadow: 0 1px #8c8fa8;
}
.hscroll button { width: 14px; display: flex; }
.hscroll .end { margin-left: auto; width: 5px; }
.thumb {
    width: 95px;
    height: 14px;
    border: 1px solid #8c8c8c;
    border-radius: 2px;
    background:
        repeating-linear-gradient(90deg, #444 0 1px, transparent 1px 3px) center / 8px 6px no-repeat,
        linear-gradient(#f6f6f6, #cfcfcf);
}
.splitter {
    position: absolute;
    left: 187px;
    top: 274px;
    display: flex;
    flex-direction: column;
    align-items: center;
    justify-content: space-around;
    width: 10px;
    height: 40px;
    border: 1px solid #222;
    border-left: 0;
    background: var(--bar);
}

/* graphics area */
.viewport {
    position: relative;
    flex: 1;
    min-width: 0;
    background:
        radial-gradient(ellipse 76% 66% at 0 0, #fff 0, #fff 45%, rgba(255, 255, 255, .5) 70%, rgba(255, 255, 255, 0) 100%),
        radial-gradient(ellipse 30% 50% at 100% 0, #f1f2f4 0, rgba(240, 241, 245, 0) 100%),
        linear-gradient(#e3e7ef 0, #dcdfe9 28%, #dde1ea 50%, #e4e7ef 57%, #f7f7f9 66%, #fefefe 76%, #fefefe 88%, #f8f9fb 100%);
}
.model { display: block; width: 100%; height: 100%; }
.axis { font-size: 11px; font-family: "Liberation Sans", sans-serif; }
.z { fill: #2222cc; }
.y { fill: #1f8a28; }
.x { fill: #dd2020; }
.view-tools { position: absolute; top: 5px; left: 436px; display: flex; }
.view-tools button { display: flex; align-items: center; justify-content: center; width: 23px; height: 16px; }
.view-tools .drop { width: 14px; }
.doc-buttons { position: absolute; top: 7px; right: 10px; display: flex; gap: 9px; opacity: .8; }
.doc-buttons button { display: flex; }
.task-pane { position: absolute; top: 59px; right: 0; width: 24px; }
.task-pane button {
    display: flex;
    align-items: center;
    justify-content: center;
    width: 24px;
    height: 24px;
    border: 1px solid #222;
    border-right: 0;
    background: var(--tab);
    box-shadow: inset 1px 1px #d5d6da;
}
.task-pane .active { background: #eef0f3; }

/* model tabs */
.sheet-tabs {
    display: flex;
    height: 16px;
    flex: none;
    padding-left: 2px;
    border-top: 1px solid var(--line);
    border-bottom: 1px solid var(--line);
    background: #e2e5eb;
}
.step { width: 15px; margin-right: 1px; border: 1px solid #999; background: #b3b5b9; }
.step svg { width: 10px; height: 10px; display: block; margin: auto; }
.sheet { height: 14px; padding: 0 15px 0 8px; border: 1px solid #222; border-top: 0; background: var(--tab); line-height: 13px; }
.sheet.active { margin-left: 2px; padding: 0 10px; background: #e9ebef; font-weight: 700; }

/* status bar */
.status { display: flex; align-items: center; height: 20px; flex: none; padding: 0 7px 0 2px; }
.edition { flex: 1; }
.state { width: 94px; }
.mode { width: 144px; }
.units { display: flex; align-items: center; gap: 20px; width: 141px; }
.tag { width: 14px; height: 14px; }

/* windows taskbar */
.taskbar {
    display: flex;
    align-items: center;
    height: 39px;
    flex: none;
    padding-left: 8px;
    border-top: 1px solid #8f867c;
    background:
        radial-gradient(ellipse 140px 30px at 56% 30%, #80664a, transparent),
        radial-gradient(ellipse 90px 24px at 45% 80%, #7a6248, transparent),
        radial-gradient(ellipse 110px 26px at 66% 50%, #6e4e38, transparent),
        radial-gradient(ellipse 60px 30px at 16% 40%, #66503e, transparent),
        radial-gradient(ellipse 70px 24px at 27% 80%, #5c4534, transparent),
        radial-gradient(ellipse 60px 30px at 85% 30%, #6b4936, transparent),
        linear-gradient(90deg, #4c4037, #3e3026 25%, #55412f 45%, #5b4432 70%, #3b2a22 76%, #43332a);
    color: #fff;
}
.start, .start svg { width: 38px; height: 38px; display: block; }
.app { display: flex; align-items: center; justify-content: center; width: 62px; height: 38px; }
.app svg { width: 30px; height: 30px; }
.start + .app { margin-left: 12px; }
.open {
    width: 59px;
    border: 1px solid #c9c2bc;
    border-radius: 3px;
    background: linear-gradient(135deg, rgba(255, 255, 255, .5), rgba(255, 255, 255, .2));
}
.stacked { width: 51px; margin: 0 11px 0 2px; background: linear-gradient(135deg, #d8d2cd, #a59c94); box-shadow: 4px 0 0 -1px #91867c, 8px 0 0 -2px #75695f; }
.cube { font: 700 16px "Liberation Sans", sans-serif; fill: #fff; text-anchor: middle; }
.tray { display: flex; align-items: center; height: 38px; margin-left: auto; }
.deskband {
    display: flex;
    align-items: center;
    justify-content: center;
    width: 59px;
    height: 38px;
    border: 1px solid #85786d;
    border-width: 1px 0 0 1px;
    border-radius: 9px 0 0 0;
    background: rgba(20, 10, 5, .3);
}
.deskband svg { width: 28px; height: 28px; }
.power { width: 99px; gap: 11px; border-right-width: 1px; }
.power svg { width: 16px; height: 12px; }
.battery {
    width: 43px;
    height: 20px;
    border: 1px solid #fff;
    box-shadow: 3px 0 0 -1px #fff;
    background: linear-gradient(90deg, #1c9438 36%, #0c0c0c 36%);
    font-size: 12px;
    line-height: 18px;
    text-align: center;
}
.notify { display: flex; justify-content: center; width: 24px; }
.notify svg { width: 16px; height: 16px; }
.notify i.up { border-width: 0 4px 4px; border-bottom-color: #fff; }
.clock { display: flex; flex-direction: column; width: 74px; font-size: 12px; line-height: 17px; text-align: center; }
.show-desktop { width: 14px; height: 37px; border: 1px solid #8a8078; background: linear-gradient(135deg, #8c8076, #4b3a30); }
```
